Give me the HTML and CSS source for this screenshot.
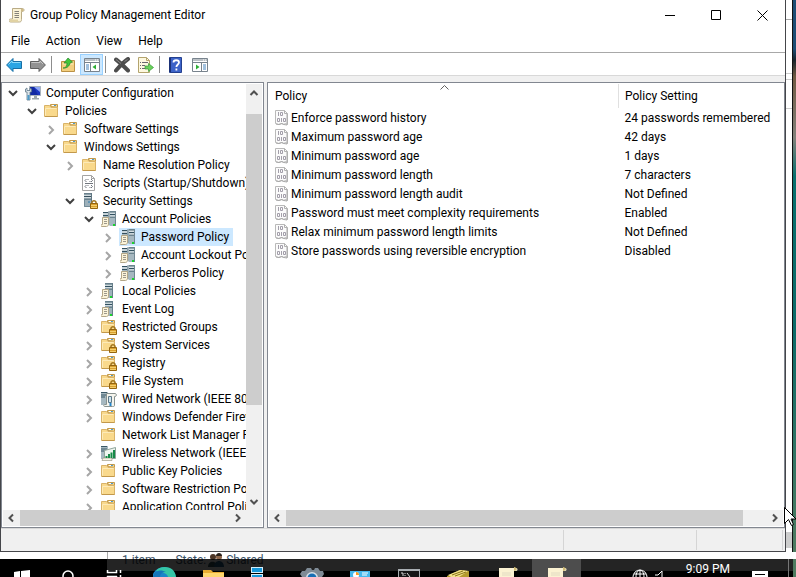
FILE: index.html
```
<!DOCTYPE html>
<html lang="en">
<head>
    <meta charset="UTF-8">
    <meta name="viewport" content="width=device-width, initial-scale=1.0">
    <title>Group Policy Management Editor</title>
    <link rel="stylesheet" href="styles.css">
</head>
<body>
    <!-- Icon set -->
    <svg class="sprite" aria-hidden="true">
        <symbol id="i-down" viewBox="0 0 16 16"><path d="M4 6l4 4 4-4" fill="none" stroke="#404040" stroke-width="2"/></symbol>
        <symbol id="i-right" viewBox="0 0 16 16"><path d="M6 5l4 4-4 4" fill="none" stroke="#a6a6a6" stroke-width="2"/></symbol>
        <symbol id="i-folder" viewBox="0 0 16 16">
            <path d="M6.500 3.500v-2h7v3z" fill="#f3d488" stroke="#c39a4c"/>
            <path d="M8 2.500h2" stroke="#fff"/><path d="M10 2.500h2" stroke="#4c9bd0"/>
            <path d="M.5 13.500v-11h5l1.500 2h6.500v9z" fill="#f9d98c" stroke="#d9b368"/>
            <path d="M1.500 12.500V5.500h11" fill="none" stroke="#fdeab8"/>
            <path d="M1 13.500h12.500" stroke="#c2984b"/>
        </symbol>
        <symbol id="i-lock" viewBox="0 0 16 16">
            <path d="M10 11V9a2.200 2.200 0 0 1 4 0V11" fill="none" stroke="#a0741c" stroke-width="1.500"/>
            <path d="M8.500 10.500h7v5h-7z" fill="#d9a02f" stroke="#94650f"/>
            <path d="M9 12.500h6M9 14.500h6" stroke="#f4cf6c"/>
        </symbol>
        <symbol id="i-tower" viewBox="0 0 16 16">
            <path d="M2 0h8v14H2z" fill="#9db0ba"/><path d="M2 1h7M2 3.500h7M2 6h7" stroke="#37505e"/>
            <path d="M2 2.200h7M2 4.800h7" stroke="#e6edf0"/><path d="M9.500 0v14" stroke="#5f7682"/>
            <path d="M2.500 6v7.500h6" fill="none" stroke="#728a96"/><path d="M6 9h2" stroke="#2b7bb0"/>
        </symbol>
        <symbol id="i-secure" viewBox="0 0 16 16"><use href="#i-tower"/><use href="#i-lock"/></symbol>
        <symbol id="i-folder-lock" viewBox="0 0 16 16"><use href="#i-folder"/><use href="#i-lock"/></symbol>
        <symbol id="i-sheet" viewBox="0 0 16 16">
            <path d="M1.500 6.500h6v7c0 1-1 2-2 2h-5c-.700 0-.700-2 0-2h1z" fill="#fbf3d8" stroke="#b3a687"/>
            <path d="M3 8.500h3M3 10.500h3M3 12.500h3" stroke="#9c988c"/>
        </symbol>
        <symbol id="i-server" viewBox="0 0 16 16">
            <path d="M4 0h8v15H4z" fill="#9fb2bb"/><path d="M4 1h7M4 3.500h7M4 6h7" stroke="#33515f"/>
            <path d="M4 2.200h7M4 4.800h7" stroke="#e3ebee"/><path d="M11.500 0v15" stroke="#667d89"/>
            <path d="M9 13h2v2H9z" fill="#19d52c"/><use href="#i-sheet"/>
        </symbol>
        <symbol id="i-servers" viewBox="0 0 16 16">
            <path d="M2 1h6v13H2zM8.500 0H15v15H8.500z" fill="#a6b8c0"/>
            <path d="M2 1.500h5M9 1h5M2 4.500h5M9 3.500h5M9 6h5" stroke="#33515f"/>
            <path d="M2 3h5M9 2.200h5M9 5h5" stroke="#eaf0f2"/>
            <path d="M8 0v14M14.500 0v15" stroke="#718792"/><path d="M12 13h2v2h-2z" fill="#19d52c"/><use href="#i-sheet"/>
        </symbol>
        <symbol id="i-wired" viewBox="0 0 16 16">
            <path d="M0 1h7v13H0z" fill="#a6b8c0"/><path d="M0 1.500h6M0 4h6M0 6h4" stroke="#3a5867"/>
            <path d="M5.500 2.500h9c1 0 1 3 0 3h-1v9c0 1-1 1-2 1h-8c-1 0-1-2 0-2h2z" fill="#f5f4ed" stroke="#88928f"/>
            <path d="M7.500 5.500h3v6h-3z" fill="#d1e4ee" stroke="#5b7888"/><path d="M9.500 12v3" stroke="#2384c9" stroke-width="2"/>
        </symbol>
        <symbol id="i-wireless" viewBox="0 0 16 16">
            <path d="M0 1h7v13H0z" fill="#a6b8c0"/><path d="M0 1.500h6M0 4h6M0 6h4" stroke="#3a5867"/>
            <path d="M3.500 5.500l11-3v11h-11z" fill="#eef5ef" stroke="#8fa59b"/><path d="M2 13h9v2.500H1z" fill="#f6f3e4" stroke="#948e78" stroke-width=".6"/>
            <path d="M5.500 13v-2M8 13V9M10.500 13V7.500M13 13V5" stroke="#178a48" stroke-width="2"/>
        </symbol>
        <symbol id="i-script" viewBox="0 0 16 16">
            <path d="M.5.500h9l3 3v12H.5z" fill="#fff" stroke="#a3a3a3"/><path d="M9.500.500v3h3" fill="none" stroke="#a3a3a3"/>
            <path d="M4.500 4L3 5.500 4.500 7M9 4l1.500 1.500L9 7M4.500 10L3 11.500 4.500 13M9 10l1.500 1.500L9 13M5.500 4.500h1M7.500 6.500h1M5.500 10.500h1M7.500 12.500h1M3 8.500h8" fill="none" stroke="#70757d"/>
        </symbol>
        <symbol id="i-computer" viewBox="0 0 16 16">
            <path d="M4.500 1.500h11v9h-11z" fill="#1c37c0" stroke="#a9b3bd"/><path d="M9 2h6v5z" fill="#8da7f4"/><path d="M5 2h4l4 8H5z" fill="#1229a3"/>
            <path d="M9 11h3v2h2v1.500H7V13h2z" fill="#9da7ad"/>
            <path d="M.500 4v3H2v8h3V7h1.500V4L5 3v2.500H2V3z" fill="#dce5ea" stroke="#60798a" stroke-width=".8"/>
            <path d="M2.500 10h2v5h-2z" fill="#4d9ac9"/>
        </symbol>
        <symbol id="i-policy" viewBox="0 0 16 16">
            <path d="M.5.500h9l3 3v11l-2-1-2 1-2-1-3 1-3-1z" fill="#fbfbfb" stroke="#b9b9b9"/><path d="M9.500.500v3h3" fill="none" stroke="#b0b0b0"/><path d="M1 14l3 .500 3-1 2 1 3 .500V4" fill="none" stroke="#a8a8a8"/>
            <path d="M3.500 2v4M5.500 2.500h2v3h-2zM2.500 8.500h2v3h-2zM6.500 8v4M8.500 8.500h2v3h-2z" fill="none" stroke="#a39faa"/>
        </symbol>
        <symbol id="i-scroll" viewBox="0 0 16 16">
            <path d="M3.500 1.500h10c2 0 2 3 0 3h-1v8c0 2-1 2.500-2 2.500h-9c-2 0-2-3 0-3h2z" fill="#fbf3d5" stroke="#b9ab86"/>
            <path d="M13 1.500c2 0 2 3 0 3h-1V2z" fill="#cdb987"/><path d="M1 12.500h8V15H1z" fill="#e1d2a3"/>
            <path d="M5.500 4.500H10M5.500 6.500H10M5.500 8.500H10M5.500 10.500H10" stroke="#85827a"/>
        </symbol>
        <symbol id="i-back" viewBox="0 0 16 16"><path d="M.6 8L7 1.500v3h8.500v7H7v3z" fill="#2aa5e4" stroke="#186fa5"/><path d="M2.500 7.500L6 4v1.500h8.500" fill="none" stroke="#8ad9fa"/></symbol>
        <symbol id="i-forward" viewBox="0 0 16 16"><path d="M15.400 8L9 1.500v3H.5v7H9v3z" fill="#929292" stroke="#606060"/><path d="M1.500 5.500H10V4l3 3" fill="none" stroke="#c5c5c5"/></symbol>
        <symbol id="i-up" viewBox="0 0 16 16">
            <path d="M1.500 14.500v-10h5l1.500-1h6.500v11z" fill="#f3cf7e" stroke="#bb9145"/><path d="M2.500 7h11" stroke="#fceabb"/>
            <path d="M3 11c3 0 4-2 4-5H4L8 1l4.500 4-2.500 1C9.500 9 7 11.500 3 11z" fill="#43c63a" stroke="#23842a" stroke-width=".7"/>
        </symbol>
        <symbol id="i-panel-left" viewBox="0 0 16 16">
            <path d="M.5 1.500h15v13H.5z" fill="#fff" stroke="#78838d"/><path d="M1 3h14M1 5.500h14" stroke="#78838d" stroke-width="1.200"/><path d="M11 3h1M13 3h1" stroke="#fff"/>
            <path d="M6.500 6v8" stroke="#78838d"/><path d="M2 8h3M2 10h3M2 12h3" stroke="#4382bd"/><path d="M12 7.500v5L8.500 10z" fill="#2eae35"/>
        </symbol>
        <symbol id="i-panel-right" viewBox="0 0 16 16">
            <path d="M.5 1.500h15v13H.5z" fill="#fff" stroke="#78838d"/><path d="M1 3h14M1 5.500h14" stroke="#78838d" stroke-width="1.200"/><path d="M11 3h1M13 3h1" stroke="#fff"/>
            <path d="M9.500 6v8" stroke="#78838d"/><path d="M11 8h3M11 10h3M11 12h3" stroke="#4382bd"/><path d="M4 7.500v5L7.500 10z" fill="#2eae35"/>
        </symbol>
        <symbol id="i-delete" viewBox="0 0 16 16"><path d="M2 2.500c3 2 9 8 12 11M14 2C11 4 5 10 2 13.500" fill="none" stroke="#4c4c4c" stroke-width="4" stroke-linecap="round"/><path d="M2 2.500l5 4M13.500 2.500l-3 2" stroke="#858585"/></symbol>
        <symbol id="i-export" viewBox="0 0 16 16">
            <path d="M.5.500h8l3 3v12H.5z" fill="#fdf8df" stroke="#b4a46e"/><path d="M8.500.500v3h3" fill="none" stroke="#b4a46e"/>
            <path d="M2 5.500h1M4 5.500h6M2 8.500h1M4 8.500h3M2 11.500h1M4 11.500h3" stroke="#69686e"/>
            <path d="M7 9h3.500V6.500l5 4-5 4V12H7z" fill="#6bd25b" stroke="#38983a" stroke-width=".7"/>
        </symbol>
        <symbol id="i-help" viewBox="0 0 16 16">
            <path d="M1.500.500h12v15h-12z" fill="#3d63c8" stroke="#24408f"/><path d="M2 1v14" stroke="#1b3277" stroke-width="2"/>
            <path d="M5.500 5.500c0-3 5.500-3 5.500 0 0 2-2.600 2-2.600 4.500M8.400 11.500v2" fill="none" stroke="#fff" stroke-width="1.800"/>
        </symbol>
        <symbol id="i-sb-up" viewBox="0 0 16 16"><path d="M4.500 10L8 6.500l3.500 3.500" fill="none" stroke="#505050" stroke-width="2"/></symbol>
        <symbol id="i-sb-down" viewBox="0 0 16 16"><path d="M4.500 6L8 9.500 11.500 6" fill="none" stroke="#505050" stroke-width="2"/></symbol>
        <symbol id="i-sb-left" viewBox="0 0 16 16"><path d="M9 4.500L5.500 8 9 11.500" fill="none" stroke="#505050" stroke-width="2"/></symbol>
        <symbol id="i-sb-right" viewBox="0 0 16 16"><path d="M6 4.500L9.500 8 6 11.500" fill="none" stroke="#505050" stroke-width="2"/></symbol>
    </svg>

    <div class="desktop">
        <main class="window">
            <header class="titlebar">
                <svg class="icon"><use href="#i-scroll"/></svg>
                <h1 class="title">Group Policy Management Editor</h1>
                <button class="caption" aria-label="Minimize"><svg viewBox="0 0 11 11"><path d="M0 5.500h10"/></svg></button>
                <button class="caption" aria-label="Maximize"><svg viewBox="0 0 11 11"><path d="M.5.500h9v9h-9z"/></svg></button>
                <button class="caption" aria-label="Close"><svg viewBox="0 0 11 11"><path d="M.5.500l10 10M10.500.500l-10 10"/></svg></button>
            </header>
            <nav class="menubar">
                <button>File</button>
                <button>Action</button>
                <button>View</button>
                <button>Help</button>
            </nav>
            <div class="toolbar">
                <button aria-label="Back"><svg class="icon"><use href="#i-back"/></svg></button>
                <button aria-label="Forward"><svg class="icon"><use href="#i-forward"/></svg></button>
                <span class="sep"></span>
                <button aria-label="Up one level"><svg class="icon"><use href="#i-up"/></svg></button>
                <button class="active" aria-label="Show console tree"><svg class="icon"><use href="#i-panel-left"/></svg></button>
                <span class="sep"></span>
                <button aria-label="Delete"><svg class="icon"><use href="#i-delete"/></svg></button>
                <button aria-label="Export list"><svg class="icon"><use href="#i-export"/></svg></button>
                <span class="sep"></span>
                <button aria-label="Help topics"><svg class="icon"><use href="#i-help"/></svg></button>
                <button aria-label="Show action pane"><svg class="icon"><use href="#i-panel-right"/></svg></button>
            </div>

            <div class="panes">
                <!-- Console tree -->
                <section class="pane tree-pane">
                    <div class="tree-body">
                        <ul class="tree">
                            <li>
                                <div class="row"><button class="twisty" aria-label="Collapse"><svg class="icon"><use href="#i-down"/></svg></button><span class="label"><svg class="icon"><use href="#i-computer"/></svg>Computer Configuration</span></div>
                                <ul>
                                    <li>
                                        <div class="row"><button class="twisty" aria-label="Collapse"><svg class="icon"><use href="#i-down"/></svg></button><span class="label"><svg class="icon"><use href="#i-folder"/></svg>Policies</span></div>
                                        <ul>
                                            <li><div class="row"><button class="twisty" aria-label="Expand"><svg class="icon"><use href="#i-right"/></svg></button><span class="label"><svg class="icon"><use href="#i-folder"/></svg>Software Settings</span></div></li>
                                            <li>
                                                <div class="row"><button class="twisty" aria-label="Collapse"><svg class="icon"><use href="#i-down"/></svg></button><span class="label"><svg class="icon"><use href="#i-folder"/></svg>Windows Settings</span></div>
                                                <ul>
                                                    <li><div class="row"><button class="twisty" aria-label="Expand"><svg class="icon"><use href="#i-right"/></svg></button><span class="label"><svg class="icon"><use href="#i-folder"/></svg>Name Resolution Policy</span></div></li>
                                                    <li><div class="row"><span class="twisty"></span><span class="label"><svg class="icon"><use href="#i-script"/></svg>Scripts (Startup/Shutdown)</span></div></li>
                                                    <li>
                                                        <div class="row"><button class="twisty" aria-label="Collapse"><svg class="icon"><use href="#i-down"/></svg></button><span class="label"><svg class="icon"><use href="#i-secure"/></svg>Security Settings</span></div>
                                                        <ul>
                                                            <li>
                                                                <div class="row"><button class="twisty" aria-label="Collapse"><svg class="icon"><use href="#i-down"/></svg></button><span class="label"><svg class="icon"><use href="#i-servers"/></svg>Account Policies</span></div>
                                                                <ul>
                                                                    <li><div class="row"><button class="twisty" aria-label="Expand"><svg class="icon"><use href="#i-right"/></svg></button><span class="label selected"><svg class="icon"><use href="#i-servers"/></svg>Password Policy</span></div></li>
                                                                    <li><div class="row"><button class="twisty" aria-label="Expand"><svg class="icon"><use href="#i-right"/></svg></button><span class="label"><svg class="icon"><use href="#i-servers"/></svg>Account Lockout Policy</span></div></li>
                                                                    <li><div class="row"><button class="twisty" aria-label="Expand"><svg class="icon"><use href="#i-right"/></svg></button><span class="label"><svg class="icon"><use href="#i-servers"/></svg>Kerberos Policy</span></div></li>
                                                                </ul>
                                                            </li>
                                                            <li><div class="row"><button class="twisty" aria-label="Expand"><svg class="icon"><use href="#i-right"/></svg></button><span class="label"><svg class="icon"><use href="#i-server"/></svg>Local Policies</span></div></li>
                                                            <li><div class="row"><button class="twisty" aria-label="Expand"><svg class="icon"><use href="#i-right"/></svg></button><span class="label"><svg class="icon"><use href="#i-server"/></svg>Event Log</span></div></li>
                                                            <li><div class="row"><button class="twisty" aria-label="Expand"><svg class="icon"><use href="#i-right"/></svg></button><span class="label"><svg class="icon"><use href="#i-folder-lock"/></svg>Restricted Groups</span></div></li>
                                                            <li><div class="row"><button class="twisty" aria-label="Expand"><svg class="icon"><use href="#i-right"/></svg></button><span class="label"><svg class="icon"><use href="#i-folder-lock"/></svg>System Services</span></div></li>
                                                            <li><div class="row"><button class="twisty" aria-label="Expand"><svg class="icon"><use href="#i-right"/></svg></button><span class="label"><svg class="icon"><use href="#i-folder-lock"/></svg>Registry</span></div></li>
                                                            <li><div class="row"><button class="twisty" aria-label="Expand"><svg class="icon"><use href="#i-right"/></svg></button><span class="label"><svg class="icon"><use href="#i-folder-lock"/></svg>File System</span></div></li>
                                                            <li><div class="row"><button class="twisty" aria-label="Expand"><svg class="icon"><use href="#i-right"/></svg></button><span class="label"><svg class="icon"><use href="#i-wired"/></svg>Wired Network (IEEE 802.3) Policies</span></div></li>
                                                            <li><div class="row"><button class="twisty" aria-label="Expand"><svg class="icon"><use href="#i-right"/></svg></button><span class="label"><svg class="icon"><use href="#i-folder"/></svg>Windows Defender Firewall</span></div></li>
                                                            <li><div class="row"><span class="twisty"></span><span class="label"><svg class="icon"><use href="#i-folder"/></svg>Network List Manager Policies</span></div></li>
                                                            <li><div class="row"><button class="twisty" aria-label="Expand"><svg class="icon"><use href="#i-right"/></svg></button><span class="label"><svg class="icon"><use href="#i-wireless"/></svg>Wireless Network (IEEE 802.11) Policies</span></div></li>
                                                            <li><div class="row"><button class="twisty" aria-label="Expand"><svg class="icon"><use href="#i-right"/></svg></button><span class="label"><svg class="icon"><use href="#i-folder"/></svg>Public Key Policies</span></div></li>
                                                            <li><div class="row"><button class="twisty" aria-label="Expand"><svg class="icon"><use href="#i-right"/></svg></button><span class="label"><svg class="icon"><use href="#i-folder"/></svg>Software Restriction Policies</span></div></li>
                                                            <li><div class="row"><button class="twisty" aria-label="Expand"><svg class="icon"><use href="#i-right"/></svg></button><span class="label"><svg class="icon"><use href="#i-folder"/></svg>Application Control Policies</span></div></li>
                                                        </ul>
                                                    </li>
                                                </ul>
                                            </li>
                                        </ul>
                                    </li>
                                </ul>
                            </li>
                        </ul>
                        <div class="scrollbar vertical">
                            <button aria-label="Scroll up"><svg class="icon"><use href="#i-sb-up"/></svg></button>
                            <div class="track"><span class="before"></span><span class="thumb"></span><span class="after"></span></div>
                            <button aria-label="Scroll down"><svg class="icon"><use href="#i-sb-down"/></svg></button>
                        </div>
                    </div>
                    <div class="scrollbar horizontal tree-scroll">
                        <button aria-label="Scroll left"><svg class="icon"><use href="#i-sb-left"/></svg></button>
                        <div class="track"><span class="thumb"></span><span class="after"></span></div>
                        <button aria-label="Scroll right"><svg class="icon"><use href="#i-sb-right"/></svg></button>
                    </div>
                </section>

                <!-- Policy list -->
                <section class="pane list-pane">
                    <svg class="sort-mark" viewBox="0 0 9 5"><path d="M.5 4.500l4-4 4 4"/></svg>
                    <table class="policies">
                        <thead>
                            <tr><th scope="col">Policy</th><th scope="col" class="setting">Policy Setting</th></tr>
                        </thead>
                        <tbody>
                            <tr><td><svg class="icon"><use href="#i-policy"/></svg>Enforce password history</td><td>24 passwords remembered</td></tr>
                            <tr><td><svg class="icon"><use href="#i-policy"/></svg>Maximum password age</td><td>42 days</td></tr>
                            <tr><td><svg class="icon"><use href="#i-policy"/></svg>Minimum password age</td><td>1 days</td></tr>
                            <tr><td><svg class="icon"><use href="#i-policy"/></svg>Minimum password length</td><td>7 characters</td></tr>
                            <tr><td><svg class="icon"><use href="#i-policy"/></svg>Minimum password length audit</td><td>Not Defined</td></tr>
                            <tr><td><svg class="icon"><use href="#i-policy"/></svg>Password must meet complexity requirements</td><td>Enabled</td></tr>
                            <tr><td><svg class="icon"><use href="#i-policy"/></svg>Relax minimum password length limits</td><td>Not Defined</td></tr>
                            <tr><td><svg class="icon"><use href="#i-policy"/></svg>Store passwords using reversible encryption</td><td>Disabled</td></tr>
                        </tbody>
                    </table>
                    <div class="scrollbar horizontal list-scroll">
                        <button aria-label="Scroll left"><svg class="icon"><use href="#i-sb-left"/></svg></button>
                        <div class="track"><span class="thumb"></span><span class="after"></span></div>
                        <button aria-label="Scroll right"><svg class="icon"><use href="#i-sb-right"/></svg></button>
                    </div>
                </section>
            </div>
            <footer class="statusbar"><span class="cell-main"></span><span class="cell-mid"></span><span class="cell-end"></span><span class="grip"></span></footer>
        </main>
        <div class="behind-side"></div>
    </div>

    <!-- Window underneath, showing through the taskbar -->
    <div class="behind-bottom">
        <div class="behind-text">
            <span>1 item</span>
            <span class="state">State:</span>
            <svg viewBox="0 0 16 14"><circle cx="5" cy="4" r="3" fill="#4c3526"/><path d="M0 14c0-7 9-7 9 0z" fill="#32545e"/><circle cx="11" cy="4" r="3" fill="#8c664b"/><path d="M8 3c0-4 6-4 6 0z" fill="#2a2019"/><path d="M6 14c0-8 10-8 10 0z" fill="#25608b"/></svg>
            <span>Shared</span>
        </div>
    </div>
    <nav class="taskbar">
        <button class="task" aria-label="Start"><svg viewBox="0 0 24 10"><path d="M5 5l6-1v6H5zM12 4l9-1v7h-9z" fill="#fff"/></svg></button>
        <button class="task" aria-label="Search"><svg viewBox="0 0 24 10"><circle cx="13" cy="9" r="5" fill="none" stroke="#fff" stroke-width="1.500"/></svg></button>
        <button class="task" aria-label="Task view"><svg viewBox="0 0 24 10"><path d="M3.500 3v2.500h9V3M3 9.500h10M3.500 9v1M12.500 9v1M16.500 3v3M16.500 8v2" fill="none" stroke="#fff" stroke-width="1.500"/></svg></button>
        <button class="task" aria-label="Edge"><svg viewBox="0 0 24 10"><circle cx="11" cy="12" r="12" fill="#1b86c9"/><path d="M3 4C7-2 22-2 23 10h-8c0-3-5-5-12-6z" fill="#35c6a7"/><path d="M0 10C1 3 8 2 13 5c-4 0-6 2-6 5z" fill="#1576b9"/></svg></button>
        <button class="task" aria-label="File Explorer"><svg viewBox="0 0 24 10"><path d="M1 3h8l2 2h11v5H1z" fill="#e9ac32"/><path d="M1 6h21v4H1z" fill="#ffd66d"/></svg></button>
        <button class="task" aria-label="Server Manager"><svg viewBox="0 0 24 10"><path d="M0 0h12v6H0zM0 7h12v3H0z" fill="#d5effb"/><path d="M1 1h10v4H1zM1 8h10v2H1z" fill="#1597da"/></svg></button>
        <button class="task" aria-label="Settings"><svg viewBox="0 0 24 10"><path d="M2 4l3 0 2-3h4l1 2h2l1-2h3l2 3h3l1 3-2 3H2L0 7z" fill="#7e8a95"/><circle cx="12" cy="11" r="6" fill="#d8e2e9"/><circle cx="12" cy="11" r="4.500" fill="#176eb4"/></svg></button>
        <button class="task" aria-label="Control Panel"><svg viewBox="0 0 24 10"><path d="M1 4h20v6H1z" fill="#43b8ee"/><circle cx="7" cy="8" r="3" fill="#fff"/><path d="M7 5v3h3a3 3 0 0 0-3-3z" fill="#f59c22"/><path d="M13 6h6M13 8h5" stroke="#fff"/></svg></button>
        <button class="task" aria-label="Command Prompt"><svg viewBox="0 0 24 10"><path d="M0 2h22v8H0z" fill="#a9aeb2"/><path d="M1 4h20v6H1z" fill="#151515"/><path d="M3 6h2v3M7 6v1M7 8v1M9 6l3 4" fill="none" stroke="#ddd"/></svg></button>
        <button class="task" aria-label="Registry tools"><svg viewBox="0 0 24 10"><path d="M0 9L13 3l9 1v6H0z" fill="#b39b2d"/><path d="M1 8l12-5 8 1-9 6H4z" fill="#f1e28a"/><path d="M5 8l11-4M8 9l11-4" stroke="#887317"/></svg></button>
        <button class="task" aria-label="Group Policy"><svg viewBox="0 0 24 10"><path d="M3 1h17c2 0 2 3 0 3h-2v6H3V4z" fill="#fbf2d2"/><path d="M18 0c3 0 4 4 0 4z" fill="#cfbb76"/><path d="M6 6h9M6 8h9" stroke="#e2dac2"/></svg></button>
        <button class="task open" aria-label="Group Policy Management Editor"><svg viewBox="0 0 24 10"><path d="M3 1h17c2 0 2 3 0 3h-2v6H3V4z" fill="#fbf2d2"/><path d="M18 0c3 0 4 4 0 4z" fill="#cfbb76"/><path d="M6 6h9M6 8h9" stroke="#e2dac2"/></svg></button>
        <div class="tray">
            <svg class="globe" viewBox="0 0 16 8"><circle cx="8" cy="8" r="7"/><path d="M8 1v7M4 8c0-9 8-9 8 0M2 5h12"/></svg>
            <svg class="speaker" viewBox="0 0 10 8"><path d="M1 6h3l4-4v6"/></svg>
            <time class="clock">9:09 PM</time>
            <svg class="notes" viewBox="0 0 16 8"><path d="M0 2h16v6H0z"/><path class="lines" d="M3 5.500h10"/></svg>
            <span class="show-desktop"></span>
        </div>
    </nav>

    <svg class="pointer" viewBox="0 0 12 19"><path d="M.5.500v16l4-4 3 6 2-1-2.500-5.500h5z"/></svg>
</body>
</html>
```
FILE: styles.css
```
* {
    box-sizing: border-box;
}

body {
    position: relative;
    display: flex;
    flex-direction: column;
    height: 100vh;
    margin: 0;
    overflow: hidden;
    background: #fff;
    color: #000;
    font-family: Roboto, "Open Sans", sans-serif;
    font-size: 12px;
    line-height: 18px;
}

button {
    padding: 0;
    border: 0;
    background: none;
    color: inherit;
    font: inherit;
}

ul {
    margin: 0;
    padding: 0;
    list-style: none;
}

svg {
    display: block;
    flex: none;
}

.sprite {
    position: absolute;
    width: 0;
    height: 0;
}

.icon {
    width: 16px;
    height: 16px;
}

.desktop {
    display: flex;
    flex: 1;
    min-height: 0;
}

.window {
    display: flex;
    flex: 1;
    flex-direction: column;
    min-width: 0;
    border: solid #45464a;
    border-width: 0 1px 1px;
    background: #fff;
}

/* Title bar and menus */
.titlebar {
    display: flex;
    align-items: center;
    height: 30px;
    padding-left: 8px;
}

.title {
    flex: 1;
    margin: 0 0 0 5px;
    font-size: 12px;
    font-weight: normal;
}

.caption {
    display: flex;
    align-items: center;
    justify-content: center;
    width: 46px;
    height: 30px;
}

.caption svg {
    width: 11px;
    height: 11px;
    fill: none;
    stroke: #000;
}

.menubar {
    display: flex;
    gap: 16px;
    height: 23px;
    padding: 0 10px;
    border-bottom: 1px solid #a8a8a8;
}

.toolbar {
    display: flex;
    gap: 1px;
    height: 23px;
    padding: 1px 1px 0;
    border-bottom: 1px solid #d8d8d8;
}

.toolbar button {
    display: flex;
    align-items: center;
    justify-content: center;
    width: 23px;
}

.toolbar .active {
    border: 1px solid #99d1ff;
    background: #cce8ff;
}

.sep {
    width: 1px;
    margin: 2px 3px 2px 1px;
    background: #8d8d8d;
}

/* Panes */
.panes {
    display: grid;
    flex: 1;
    grid-template-columns: 263px 1fr;
    gap: 3px;
    min-height: 0;
    padding-top: 6px;
    background: #f0f0f0;
}

.pane {
    display: flex;
    flex-direction: column;
    min-width: 0;
    min-height: 0;
    padding: 1px;
    border: 1px solid #828790;
    background: #fff;
}

.tree-body {
    display: flex;
    flex: 1;
    min-height: 0;
}

.tree {
    flex: 1;
    min-width: 0;
    overflow: hidden;
    padding-left: 2px;
    white-space: nowrap;
}

.tree ul {
    padding-left: 19px;
}

.row {
    display: flex;
    height: 18px;
}

.twisty {
    flex: none;
    width: 16px;
    height: 18px;
    margin-right: 3px;
}

.label {
    display: flex;
    align-items: center;
    gap: 5px;
    padding: 0 4px 0 1px;
}

.selected {
    background: #cce8ff;
}

/* Scrollbars */
.scrollbar {
    display: flex;
    flex: none;
    background: #f0f0f0;
}

.scrollbar button {
    display: flex;
    align-items: center;
    justify-content: center;
    width: 17px;
    height: 17px;
}

.track {
    display: flex;
    flex: 1;
}

.thumb {
    background: #cdcdcd;
}

.vertical,
.vertical .track {
    flex-direction: column;
}

.vertical {
    width: 16px;
}

.vertical button {
    width: 16px;
}

.vertical .before {
    flex: 13;
}

.vertical .thumb {
    flex: 290;
}

.vertical .after {
    flex: 88;
}

.horizontal {
    height: 16px;
}

.horizontal button {
    height: 16px;
}

.tree-scroll {
    padding-right: 16px;
}

.tree-scroll .thumb {
    flex: 3;
}

.tree-scroll .after {
    flex: 4;
}

.list-scroll .thumb {
    flex: 20;
}

.list-scroll .after {
    flex: 1;
}

/* Policy list */
.list-pane {
    position: relative;
}

.sort-mark {
    position: absolute;
    top: 2px;
    left: 172px;
    width: 9px;
    height: 5px;
    fill: none;
    stroke: #606060;
}

.policies {
    width: 100%;
    margin-bottom: auto;
    border-collapse: collapse;
    table-layout: fixed;
    white-space: nowrap;
}

.policies th {
    height: 24px;
    padding: 0 6px;
    font-weight: normal;
    text-align: left;
}

.policies .setting {
    width: 32%;
    border-left: 1px solid #e0e0e0;
}

.policies td {
    height: 19px;
    padding: 0 6px;
}

.policies .icon {
    float: left;
    margin-top: 1px;
}

.statusbar {
    display: flex;
    height: 23px;
    padding-bottom: 1px;
    border-top: 1px solid #d8d8d8;
    background: #f0f0f0;
}

.statusbar span {
    margin-top: 1px;
    border-right: 1px solid #d5d5d5;
}

.cell-main {
    flex: 564;
}

.cell-mid {
    flex: 133;
}

.cell-end {
    flex: 85;
}

.statusbar .grip {
    width: 2px;
    border: 0;
}

/* Things behind the editor window */
.behind-side {
    width: 10px;
    border-right: 3px solid #17656a;
    border-image: linear-gradient(#1c4d74 0 9%, #17242c 11%, #6f5941 14%, #83817a 25%, #08706e 32%, #0c6b68 60%, #4f7c60) 1;
    background:
        linear-gradient(#aaa, #aaa) 0 19px / 100% 1px no-repeat,
        linear-gradient(#ccc, #ccc) 0 73px / 100% 1px no-repeat,
        linear-gradient(#ccc, #ccc) 0 79px / 100% 1px no-repeat,
        linear-gradient(#ccc, #ccc) 0 108px / 100% 1px no-repeat,
        linear-gradient(#cdcdcd, #cdcdcd) 0 532px / 100% 16px no-repeat,
        #fff;
    box-shadow: inset -1px 0 #111;
}

.behind-bottom {
    position: relative;
    height: 7px;
    margin-left: 107px;
    border-left: 1px solid #aaa;
}

.behind-text {
    position: absolute;
    top: 0;
    left: 14px;
    display: flex;
    align-items: center;
    height: 16px;
    color: #3b5268;
}

.behind-text .state {
    margin-left: 20px;
}

.behind-text svg {
    width: 16px;
    height: 14px;
    margin: 0 2px;
}

/* The bar lets the white window behind it shine through a little */
.taskbar {
    position: relative;
    display: flex;
    height: 18px;
    background:
        linear-gradient(90deg, #000 107px, transparent 107px),
        linear-gradient(rgba(0, 0, 0, .86) 12px, #000 12px);
}

.task {
    display: flex;
    align-items: flex-end;
    justify-content: center;
    width: 49px;
}

.task:first-child {
    width: 42px;
}

.task svg {
    width: 24px;
    height: 10px;
}

.open {
    background: #4d4d4d;
}

.tray {
    display: flex;
    flex: 1;
    align-items: flex-end;
    justify-content: flex-end;
    color: #fff;
}

.tray svg {
    height: 8px;
    fill: none;
    stroke: #fff;
}

.globe {
    width: 16px;
    margin-right: 6px;
}

.speaker {
    width: 10px;
    margin-right: 22px;
}

.clock {
    height: 18px;
    line-height: 20px;
}

.tray .notes {
    width: 16px;
    margin: 0 20px 0 22px;
    fill: #fff;
    stroke: none;
}

.notes .lines {
    stroke: #000;
}

.show-desktop {
    width: 8px;
    height: 18px;
    border-left: 1px solid #777;
    border-right: 3px solid #4f7c60;
}

.pointer {
    position: absolute;
    top: 507px;
    right: 0;
    width: 12px;
    height: 19px;
    fill: #fff;
    stroke: #000;
}
```
